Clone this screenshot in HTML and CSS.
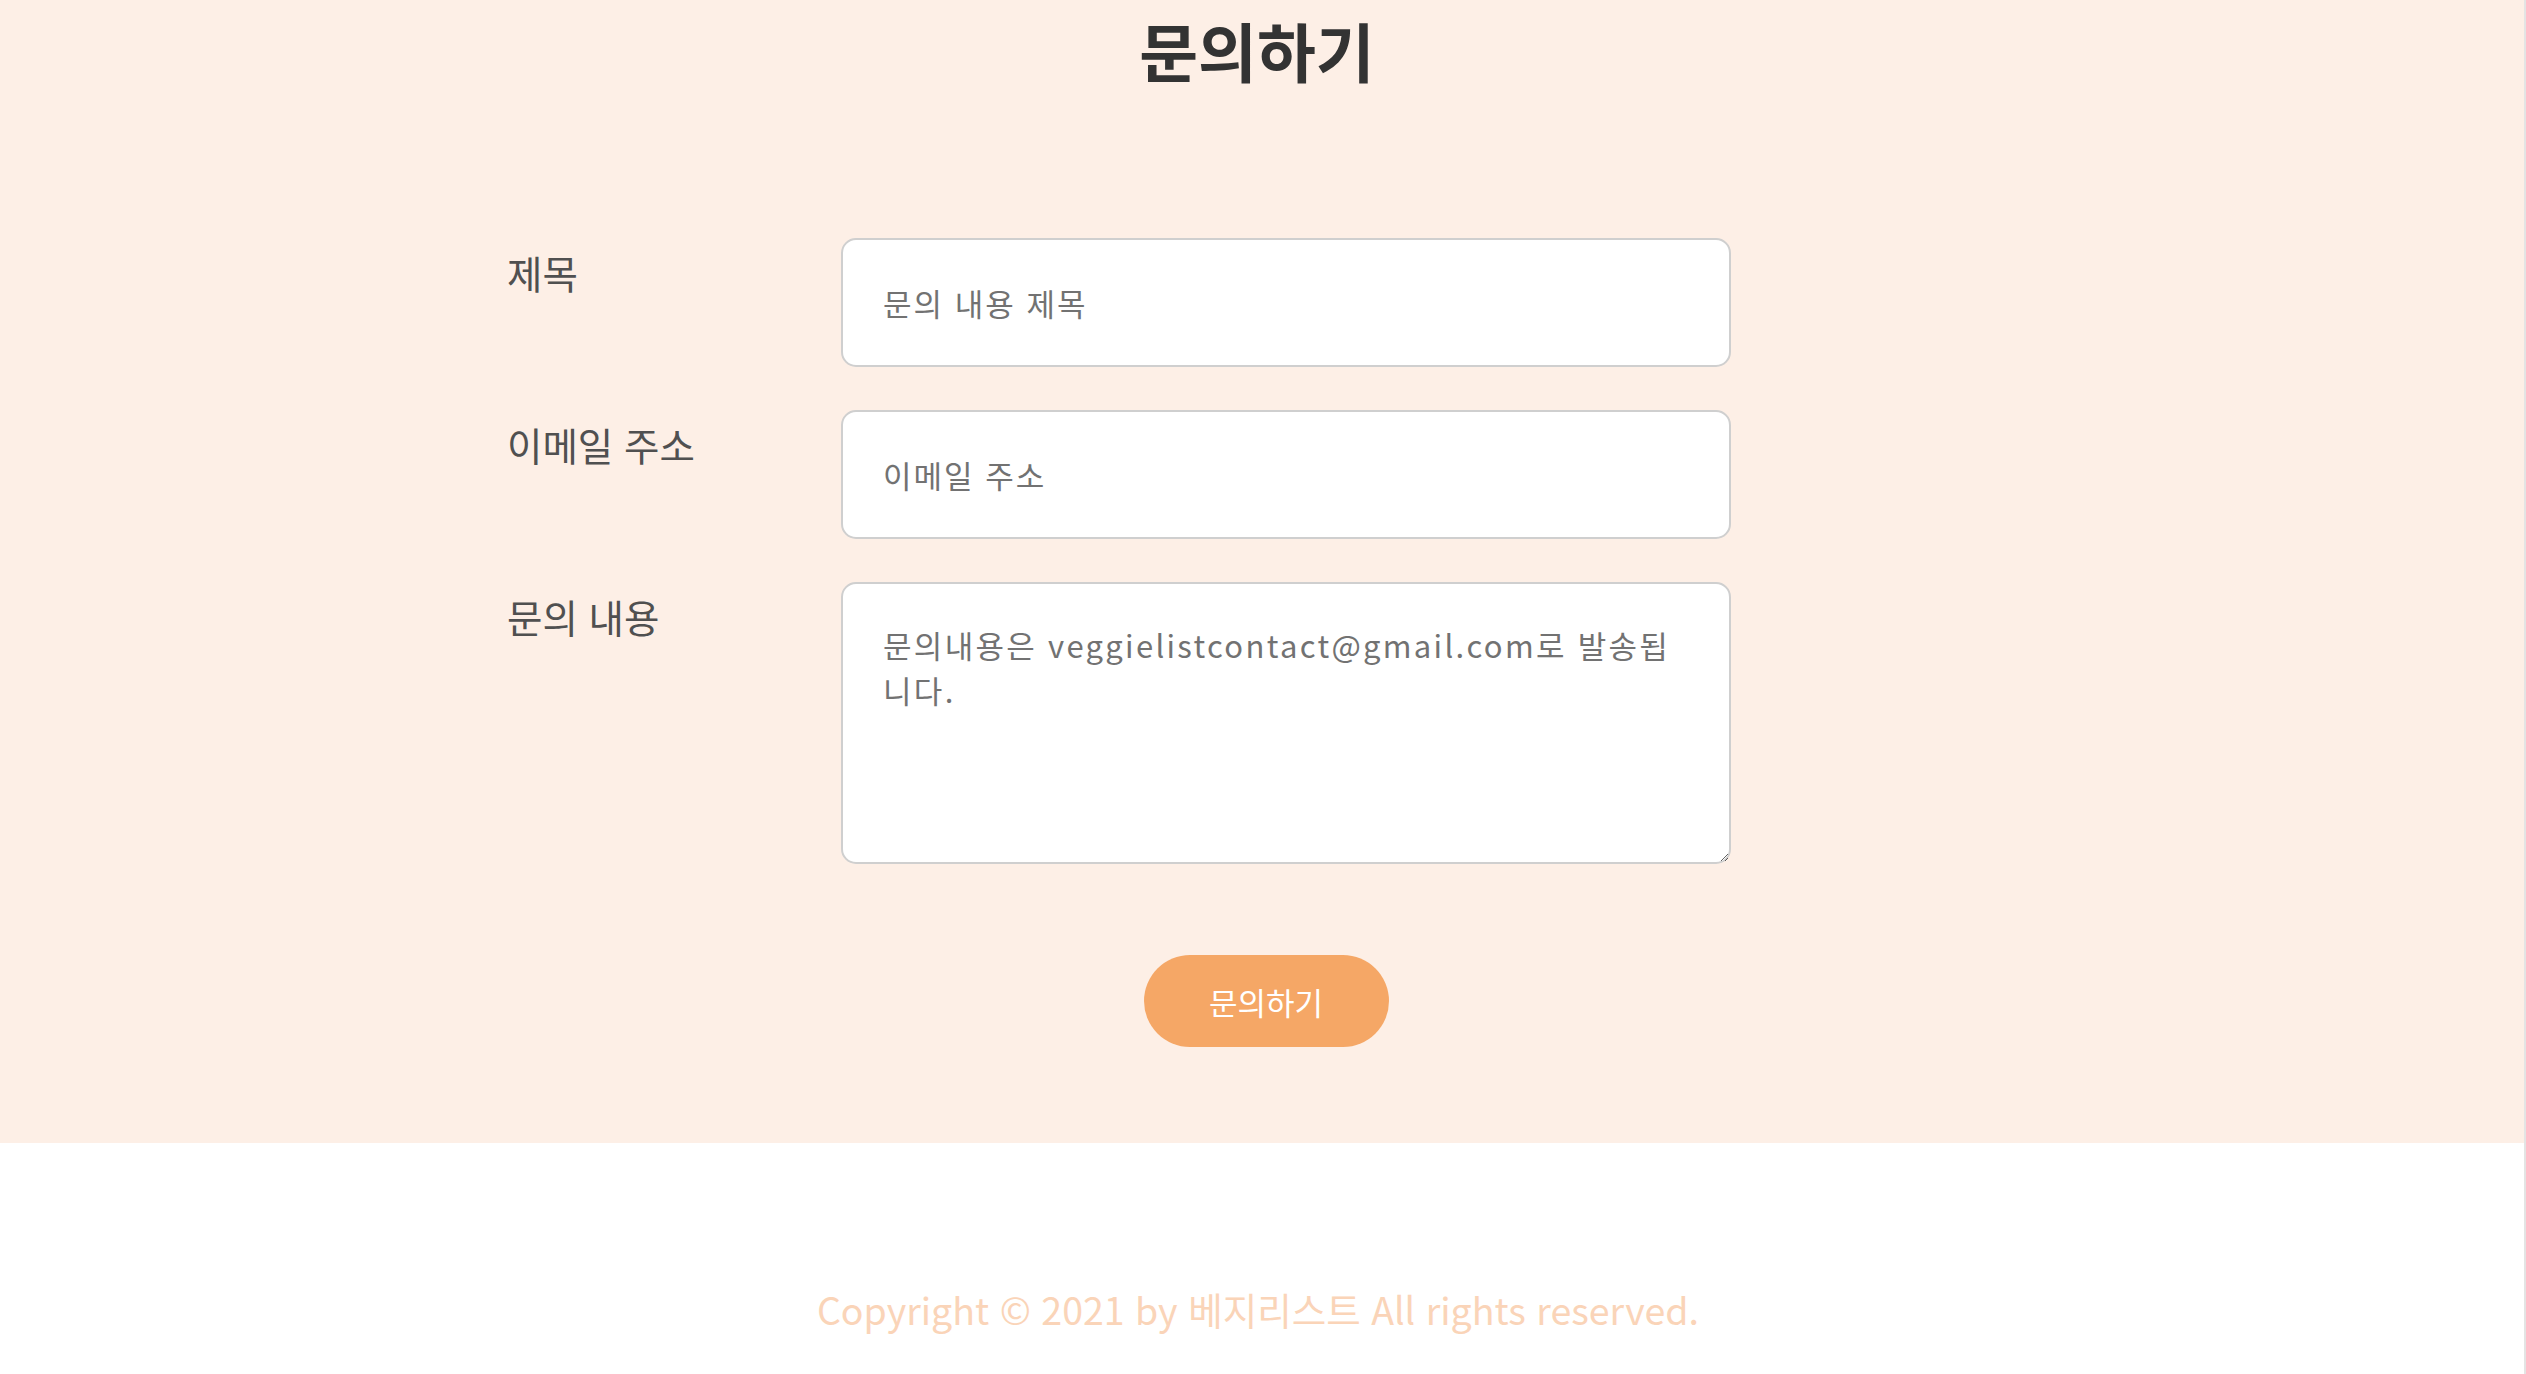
FILE: index.html
```html
<!DOCTYPE html>
<html lang="ko">
<head>
<meta charset="utf-8">
<title>문의하기</title>
<link rel="stylesheet" href="styles.css">
</head>
<body>
<main class="contact">
  <h1 class="contact-title">문의하기</h1>
  <form class="contact-form">
    <label class="field-label" for="subject">제목</label>
    <input class="field-input" id="subject" type="text" placeholder="문의 내용 제목">
    <label class="field-label" for="email">이메일 주소</label>
    <input class="field-input" id="email" type="email" placeholder="이메일 주소">
    <label class="field-label" for="message">문의 내용</label>
    <textarea class="field-textarea" id="message" placeholder="문의내용은 veggielistcontact@gmail.com로 발송됩&#10;니다."></textarea>
    <div class="form-actions">
      <button class="submit-btn" type="button">문의하기</button>
    </div>
  </form>
</main>
<footer class="site-footer">
  <p class="copyright">Copyright © 2021 by 베지리스트 All rights reserved.</p>
</footer>
</body>
</html>
```
FILE: styles.css
```css
* { box-sizing: border-box; }

html, body {
  margin: 0;
  padding: 0;
  background: #ffffff;
}

body {
  font-family: "Noto Sans CJK KR", "Noto Sans", sans-serif;
  border-right: 2px solid #e4e4e4;
  min-height: 1374px;
}

.contact {
  background: #fdefe6;
  padding: 9px 0 96px;
}

.contact-title {
  margin: 0;
  text-align: center;
  font-size: 64px;
  line-height: 80px;
  font-weight: 700;
  color: #333333;
  padding-right: 10px;
}

.contact-form {
  width: 1510px;
  margin: 149px auto 0;
  display: grid;
  grid-template-columns: 334px 889px;
  row-gap: 43px;
}

.field-label {
  font-size: 38.5px;
  line-height: 54px;
  padding-top: 7px;
  color: #505050;
}

.field-input,
.field-textarea {
  font-family: inherit;
  font-size: 31px;
  letter-spacing: 2px;
  color: #555555;
  background: #ffffff;
  border: 2px solid #cfcfcf;
  border-radius: 15px;
  outline: none;
  width: 890px;
}

.field-input {
  height: 129px;
  padding: 0 40px;
}

.field-textarea {
  height: 282px;
  padding: 38px 40px;
  line-height: 45px;
  letter-spacing: 2.3px;
  resize: vertical;
  display: block;
}

.field-input::placeholder,
.field-textarea::placeholder {
  color: #727272;
}

.form-actions {
  grid-column: 1 / -1;
  display: flex;
  justify-content: center;
  padding-top: 48px;
  width: 2524px;
  margin-left: -507px;
}

.submit-btn {
  width: 245px;
  height: 92px;
  border: none;
  border-radius: 46px;
  background: #f5a766;
  color: #ffffff;
  font-family: inherit;
  font-size: 31px;
  cursor: pointer;
  margin-left: 8px;
}

.site-footer {
  background: #ffffff;
  padding: 140px 0 140px;
}

.copyright {
  margin: 0;
  text-align: center;
  font-size: 37.5px;
  line-height: 52px;
  color: #fad4b8;
  padding-right: 8px;
}
```
